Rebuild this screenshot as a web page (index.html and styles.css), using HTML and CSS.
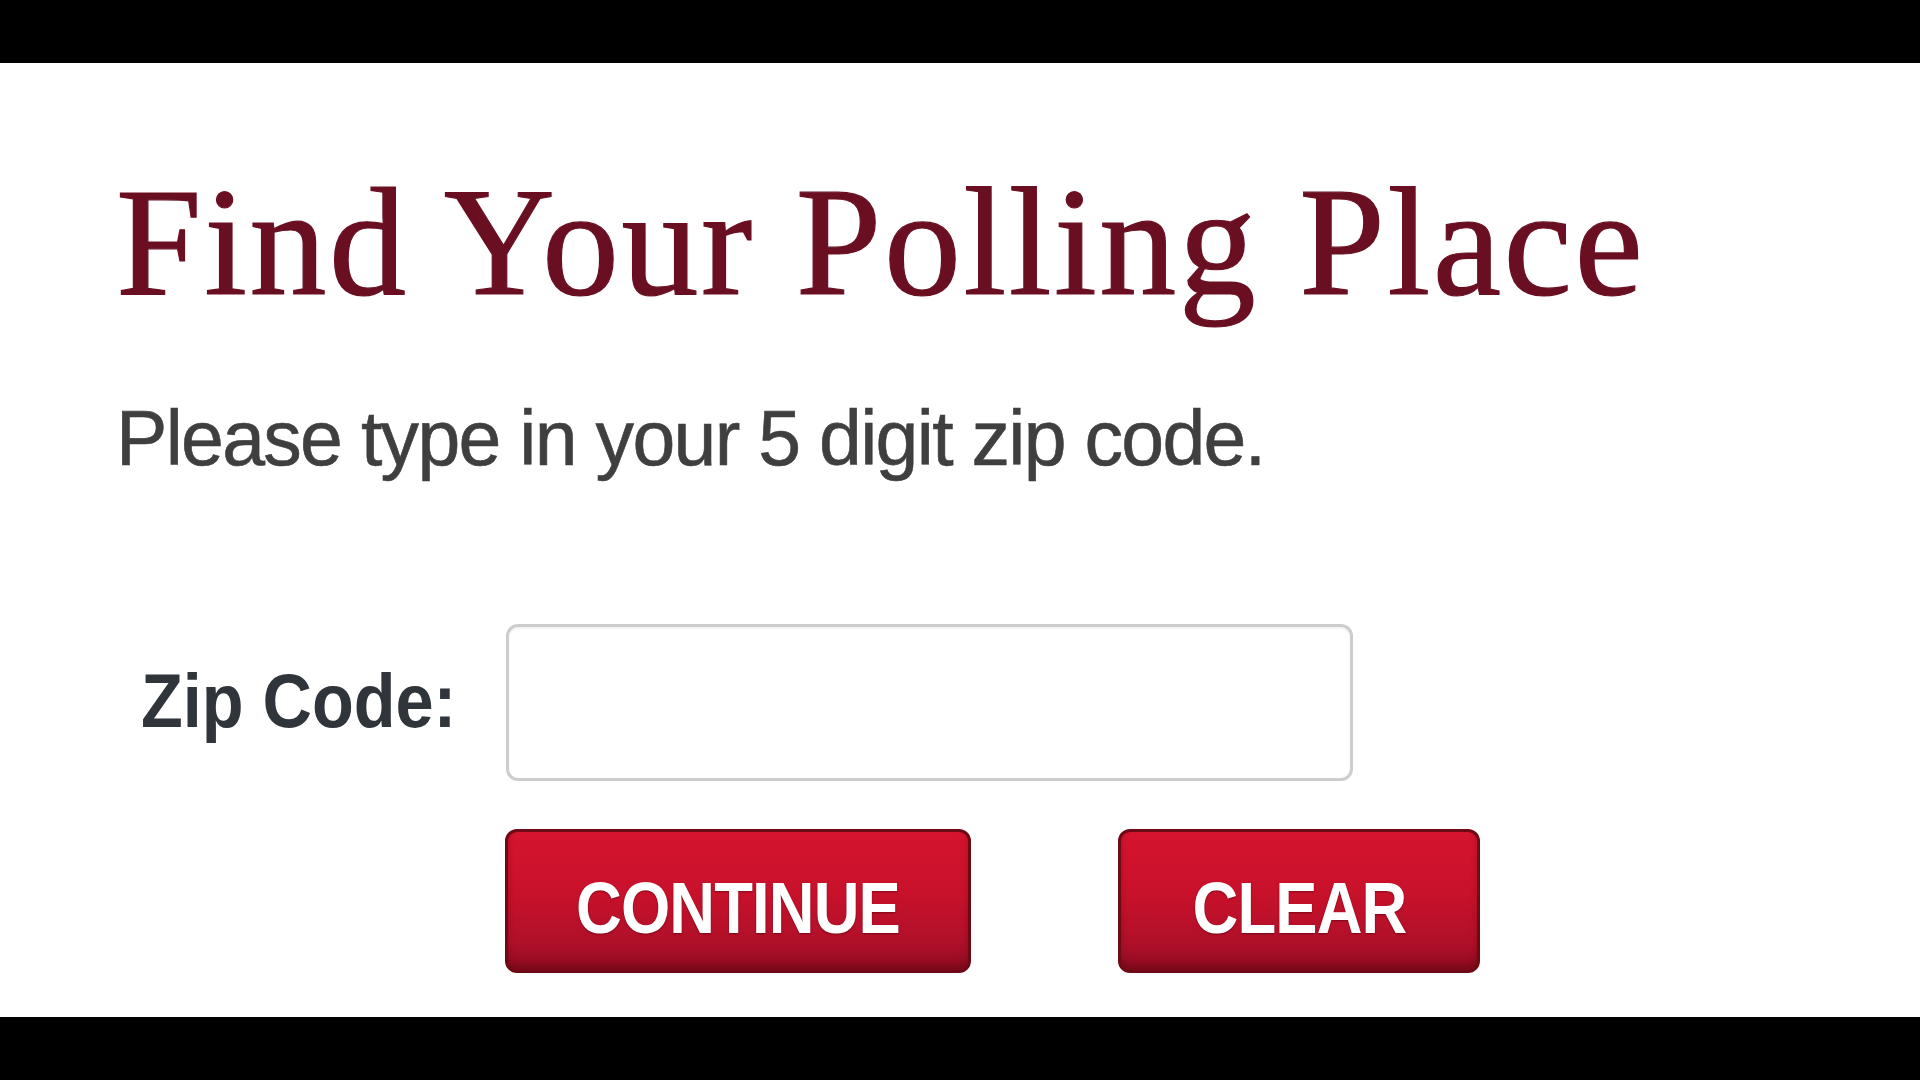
FILE: index.html
```html
<!DOCTYPE html>
<html lang="en">
<head>
<meta charset="utf-8">
<title>Find Your Polling Place</title>
<link rel="stylesheet" href="styles.css">
</head>
<body>
<div class="bar"></div>
<main class="page">
  <h1 class="title">Find Your Polling Place</h1>
  <p class="intro">Please type in your 5 digit zip code.</p>
  <form class="form">
    <label class="label" for="zip"><span class="squeeze">Zip Code:</span></label>
    <input class="field" id="zip" type="text">
    <div class="actions">
      <button type="button" class="btn btn-continue"><span class="btn-text">CONTINUE</span></button>
      <button type="reset" class="btn btn-clear"><span class="btn-text">CLEAR</span></button>
    </div>
  </form>
</main>
<div class="bar"></div>
</body>
</html>
```

FILE: styles.css
```css
html, body {
  margin: 0;
  padding: 0;
  height: 100%;
}
body {
  display: flex;
  flex-direction: column;
  background: #000;
  overflow: hidden;
}
.bar {
  height: 63px;
  flex: 0 0 63px;
  background: #000;
}
.page {
  flex: 1;
  background: #fff;
  padding: 103px 0 0 116px;
  box-sizing: border-box;
}
.title {
  margin: 0;
  font-family: "Liberation Serif", "Times New Roman", serif;
  font-weight: normal;
  font-size: 154px;
  line-height: 152px;
  letter-spacing: 2.5px;
  color: #6a0f22;
  -webkit-text-stroke: 1.2px #6a0f22;
}
.intro {
  margin: 82px 0 0 0;
  font-family: "Liberation Sans", Arial, sans-serif;
  font-size: 77px;
  line-height: 77px;
  letter-spacing: -1.7px;
  color: #3f3f3f;
  -webkit-text-stroke: 0.6px #3f3f3f;
}
.form {
  margin-top: 147px;
  display: grid;
  grid-template-columns: 390px auto;
  align-items: center;
}
.label {
  padding-left: 25px;
  font-family: "Liberation Sans", Arial, sans-serif;
  font-weight: bold;
  font-size: 76px;
  line-height: 76px;
  color: #2f353a;
  margin-top: -4px;
  white-space: nowrap;
}
.squeeze {
  display: inline-block;
  transform: scaleX(0.9);
  transform-origin: left center;
}
.field {
  width: 847px;
  height: 157px;
  box-sizing: border-box;
  border: 3px solid #cdcdcd;
  border-radius: 12px;
  background: #fff;
  box-shadow: inset 0 2px 2px rgba(0,0,0,0.05);
  outline: none;
  margin: 0;
}
.actions {
  grid-column: 2;
  margin-top: 48px;
  display: flex;
  gap: 147px;
  margin-left: -1px;
}
.btn {
  height: 144px;
  box-sizing: border-box;
  border: 3px solid #6d0a16;
  border-radius: 12px;
  background: linear-gradient(to bottom, #d6142f 0%, #c8112b 45%, #b0102a 80%, #8e0c1f 100%);
  box-shadow: inset 0 -6px 6px rgba(90, 0, 15, 0.35);
  color: #fff;
  font-family: "Liberation Sans", Arial, sans-serif;
  font-weight: bold;
  font-size: 72px;
  line-height: 1;
  text-shadow: 0 1px 2px rgba(80, 0, 10, 0.6);
  padding: 14px 0 0 0;
  cursor: pointer;
  white-space: nowrap;
}
.btn-text {
  display: inline-block;
  letter-spacing: -1px;
  transform: scaleX(0.88);
  transform-origin: center;
}
.btn-continue {
  width: 466px;
}
.btn-clear {
  width: 362px;
}
```
